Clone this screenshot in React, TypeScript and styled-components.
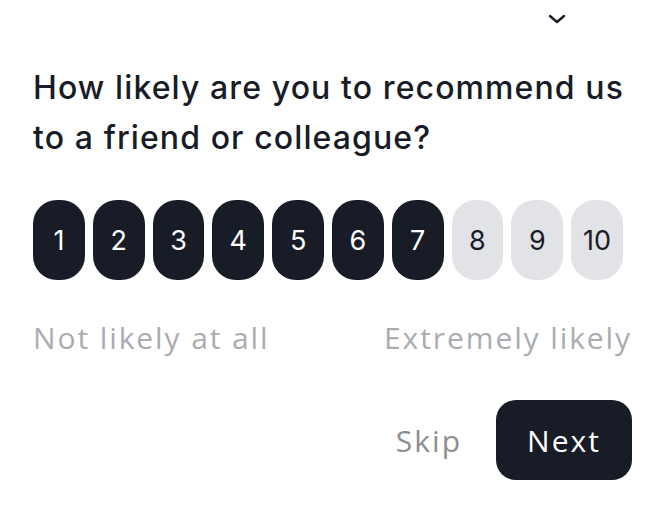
import React, { useState } from "react";
import styled, { createGlobalStyle } from "styled-components";

const Global = createGlobalStyle`
  html, body { margin: 0; padding: 0; background: #ffffff; }
  body { font-family: Inter, "Noto Sans", sans-serif; }
  * { box-sizing: border-box; }
`;

const Page = styled.div`
  width: 664px;
  height: 512px;
  overflow: hidden;
  position: relative;
  background: #ffffff;
`;

const Tab = styled.button`
  position: absolute;
  top: -10px;
  left: 505px;
  width: 104px;
  height: 44px;
  border: none;
  border-radius: 50%;
  background: #ffffff;
  box-shadow: 0 0 1px rgba(0, 0, 0, 0.05);
  display: flex;
  align-items: flex-end;
  justify-content: center;
  padding: 0 0 10px;
  color: #171c26;
  z-index: 1;
`;

const Card = styled.section`
  margin: 34px 0 0 0;
  height: 470px;
  border-radius: 24px;
  background: #ffffff;
  box-shadow: 0 0 1px rgba(0, 0, 0, 0.06);
  padding: 29px 32px 0 33px;
  display: flex;
  flex-direction: column;
  position: relative;
  z-index: 2;
`;

const Question = styled.h1`
  margin: 0;
  font-family: Inter, sans-serif;
  font-weight: 500;
  font-size: 32px;
  line-height: 50px;
  color: #171c26;
  letter-spacing: 1.1px;
`;

const Scale = styled.div`
  display: flex;
  gap: 8px;
  width: 590px;
  margin-top: 37px;
`;

const Score = styled.button<{ $on: boolean }>`
  flex: 1;
  height: 80px;
  border: none;
  border-radius: 24px;
  padding: 0;
  font-family: Inter, sans-serif;
  font-size: 27px;
  font-weight: 400;
  background: ${(p) => (p.$on ? "#171c26" : "#e2e3e6")};
  color: ${(p) => (p.$on ? "#ffffff" : "#171c26")};
  cursor: pointer;
`;

const Labels = styled.div`
  display: flex;
  justify-content: space-between;
  margin-top: 38px;
  font-family: "Open Sans", sans-serif;
  font-size: 30px;
  line-height: 40px;
  letter-spacing: 1.9px;
  color: #aaacb1;
`;

const Actions = styled.div`
  display: flex;
  justify-content: flex-end;
  align-items: center;
  gap: 34px;
  margin-top: 42px;
`;

const Skip = styled.button`
  border: none;
  background: none;
  padding: 0;
  font-family: "Open Sans", sans-serif;
  font-size: 30px;
  font-weight: 500;
  letter-spacing: 2px;
  color: #8c8e93;
`;

const Next = styled.button`
  width: 136px;
  height: 80px;
  border: none;
  border-radius: 20px;
  background: #171c26;
  color: #ffffff;
  font-family: "Open Sans", sans-serif;
  font-size: 30px;
  font-weight: 500;
  letter-spacing: 2px;
`;

export default function App() {
  const [value, setValue] = useState(7);
  return (
    <Page>
      <Global />
      <Tab aria-label="Collapse">
        <svg width="18" height="10" viewBox="0 0 18 10" fill="none">
          <path d="M2 2l7 6 7-6" stroke="currentColor" strokeWidth="2.4" strokeLinecap="round" strokeLinejoin="round" />
        </svg>
      </Tab>
      <Card>
        <Question>How likely are you to recommend us to a friend or colleague?</Question>
        <Scale>
          {Array.from({ length: 10 }, (_, i) => i + 1).map((n) => (
            <Score key={n} $on={n <= value} onClick={() => setValue(n)}>
              {n}
            </Score>
          ))}
        </Scale>
        <Labels>
          <span>Not likely at all</span>
          <span>Extremely likely</span>
        </Labels>
        <Actions>
          <Skip>Skip</Skip>
          <Next>Next</Next>
        </Actions>
      </Card>
    </Page>
  );
}
